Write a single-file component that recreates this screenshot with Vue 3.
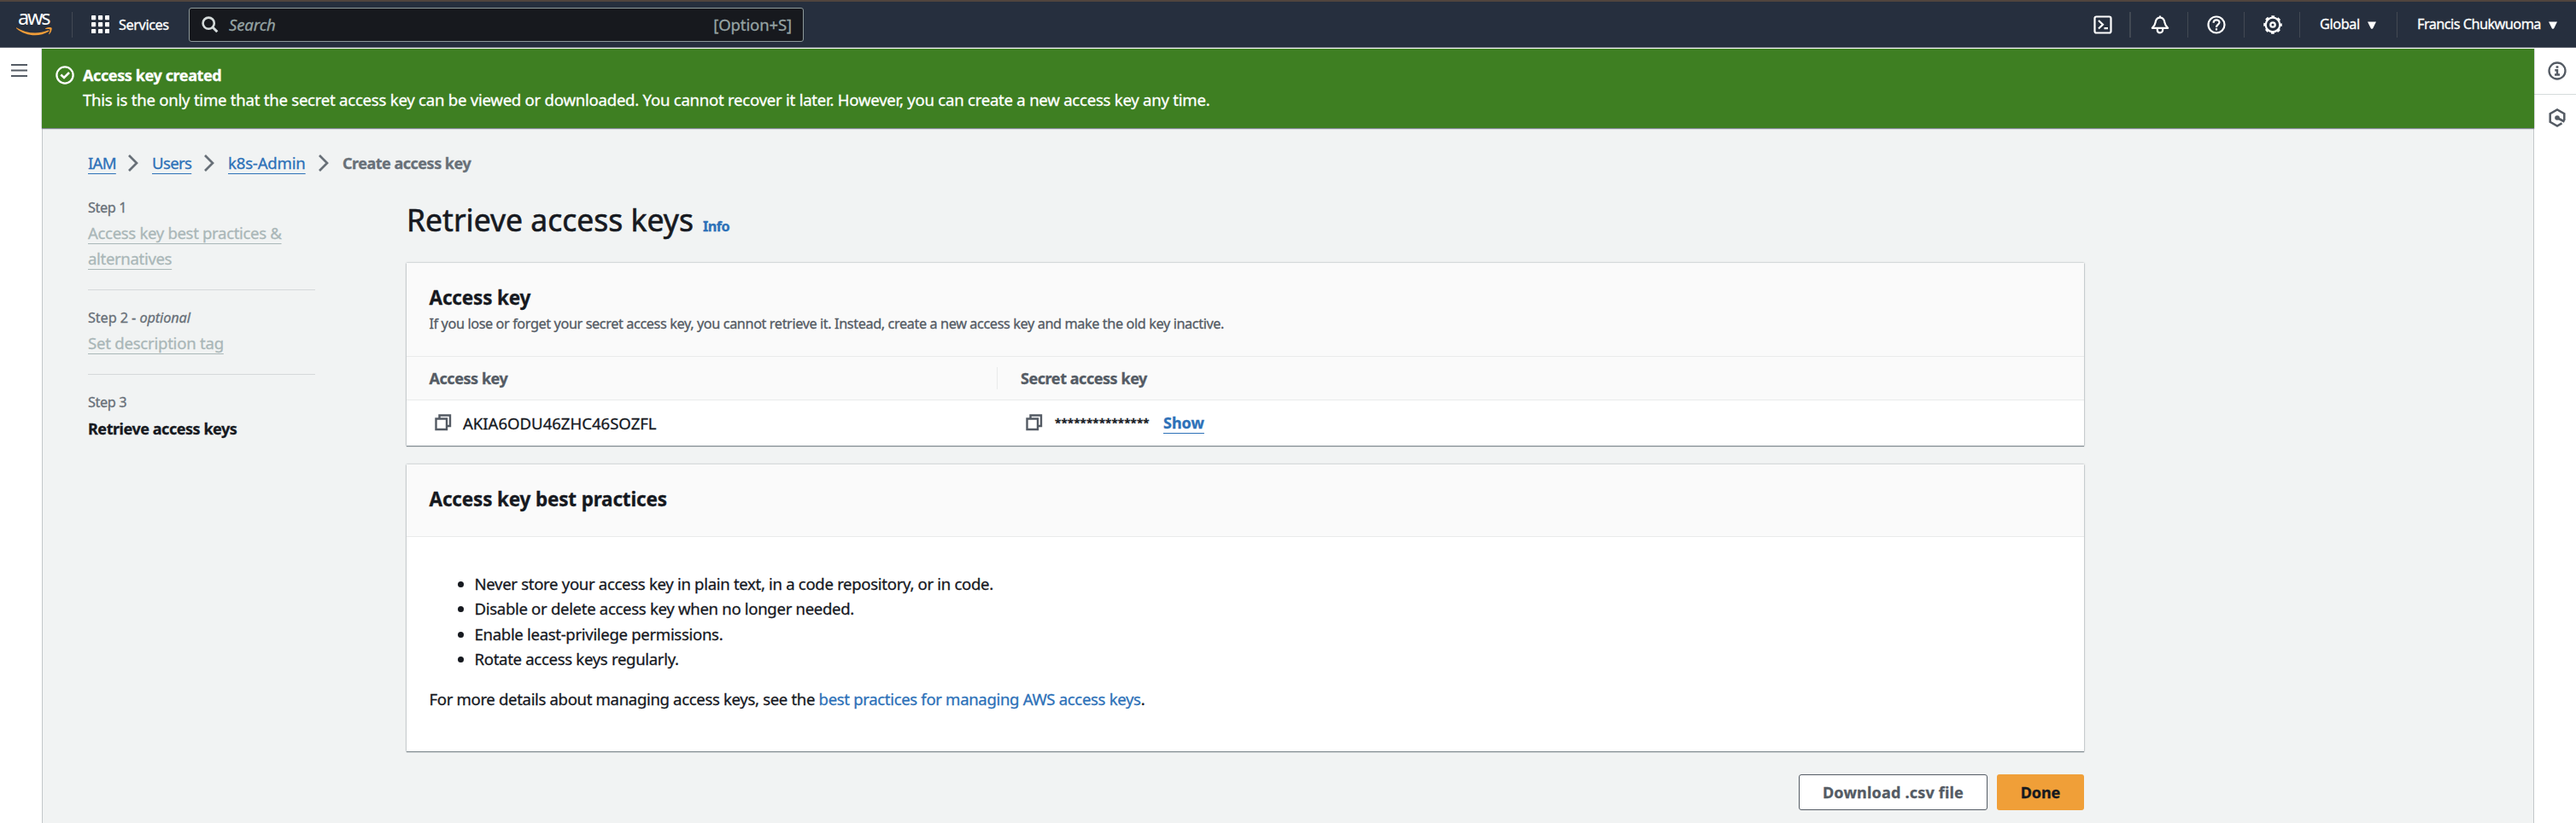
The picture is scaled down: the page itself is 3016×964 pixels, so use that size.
<script setup>
const practices = [
  'Never store your access key in plain text, in a code repository, or in code.',
  'Disable or delete access key when no longer needed.',
  'Enable least-privilege permissions.',
  'Rotate access keys regularly.',
]
const crumbs = [
  { label: 'IAM', cls: 'c1' },
  { label: 'Users', cls: 'c2' },
  { label: 'k8s-Admin', cls: 'c3' },
]
const dots = [0, 8, 16]
</script>

<template>
  <div class="page">
    <header class="topbar">
      <svg class="logo" width="46" height="42" viewBox="0 -10 46 42">
        <text x="3" y="18" textLength="38.5" class="logo-text">aws</text>
        <path class="swoosh" d="M1.500 21.400C12 28 26 29.500 38.200 24.600C39.800 24.200 40 25.300 38.800 26C28 32.800 11.500 31.400 1.200 22.200C.8 21.700 1 21.200 1.500 21.400Z" />
        <path class="swoosh" d="M35.200 22.300C37.500 20.800 42 20.600 42.600 21.700C43.100 22.800 42 27 39.700 29C39.200 29.400 38.900 29.200 39.100 28.700C39.900 26.800 40.900 24.200 40.400 23.500C39.800 22.800 37.300 22.900 35.600 23.100C35 23.100 34.800 22.700 35.200 22.300Z" />
      </svg>
      <div class="divider first"></div>
      <div class="services">
        <svg width="21" height="21" viewBox="0 0 21 21" fill="#fff">
          <template v-for="y in dots" :key="y">
            <rect v-for="x in dots" :key="x" :x="x" :y="y" width="5.200" height="5.200" rx="0.8" />
          </template>
        </svg>
        <span>Services</span>
      </div>
      <div class="search">
        <svg width="20" height="20" viewBox="0 0 20 20" fill="none" stroke="#d5dbdb" stroke-width="2.600">
          <circle cx="8.200" cy="8.200" r="6.600" />
          <path d="M12.800 12.800L18.300 18.300" stroke-width="3" />
        </svg>
        <span class="ph">Search</span>
        <span class="short">[Option+S]</span>
      </div>
      <nav class="tools">
        <div class="cell icon w1">
          <svg width="22" height="22" viewBox="0 0 22 22" fill="none" stroke="#fff" stroke-width="2.200">
            <rect x="1.500" y="1.500" width="19" height="19" rx="2" />
            <path d="M6 6L11 10.800L6 15.500M12.500 15.200H17" />
          </svg>
        </div>
        <div class="cell icon w2">
          <svg width="22" height="22" viewBox="0 0 22 22" fill="none" stroke="#fff" stroke-width="2.200" stroke-linejoin="round">
            <path d="M11 0.500V2.500M1.800 14.800C5.800 11.700 5.300 9 6 6.500C6.800 3.800 8.800 2.600 11 2.600S15.200 3.800 16 6.500C16.700 9 16.200 11.700 20.200 14.800Z" />
            <path d="M7.800 15.500V17C7.800 21.500 14.200 21.500 14.200 17V15.500" />
          </svg>
        </div>
        <div class="cell icon w3">
          <svg width="22" height="22" viewBox="0 0 22 22" fill="none" stroke="#fff" stroke-width="2.200">
            <circle cx="11" cy="11" r="9.500" />
            <path d="M7.600 8.800C7.600 4.200 14.500 4.500 14.500 8.300C14.500 10.700 11 10.700 11 14" />
            <path d="M11 15.200V17.500" />
          </svg>
        </div>
        <div class="cell icon w3">
          <svg width="22" height="22" viewBox="0 0 22 22" fill="none" stroke="#fff" stroke-linejoin="round">
            <circle cx="11" cy="11" r="8.300" stroke-width="2.200" />
            <circle cx="11" cy="11" r="9.700" stroke-width="2.200" stroke-dasharray="3.800 3.818" stroke-dashoffset="1.900" />
            <circle cx="11" cy="11" r="2.700" stroke-width="2.300" />
          </svg>
        </div>
        <div class="cell menu global"><span>Global</span><svg width="10" height="9" viewBox="0 0 10 9"><path d="M0 .5H10L6.200 8.200Q5 9.500 3.800 8.200Z" fill="#fff" /></svg></div>
        <div class="cell menu user"><span>Francis Chukwuoma</span><svg width="10" height="9" viewBox="0 0 10 9"><path d="M0 .5H10L6.200 8.200Q5 9.500 3.800 8.200Z" fill="#fff" /></svg></div>
      </nav>
    </header>

    <div class="body">
      <aside class="left">
        <svg width="19" height="17" viewBox="0 0 19 17" stroke="#545b64" stroke-width="2.200">
          <path d="M0 2H19M0 8.500H19M0 15H19" />
        </svg>
      </aside>

      <main class="main">
        <section class="flash">
          <svg width="22" height="22" viewBox="0 0 22 22" fill="none" stroke="#fff" stroke-width="2.300">
            <circle cx="11" cy="11" r="9.600" />
            <path d="M6.300 10.500L10 14L16 8" stroke-width="2.600" />
          </svg>
          <div>
            <div class="flash-title">Access key created</div>
            <div class="flash-text">This is the only time that the secret access key can be viewed or downloaded. You cannot recover it later. However, you can create a new access key any time.</div>
          </div>
        </section>

        <div class="content">
          <div class="crumbs">
            <template v-for="c in crumbs" :key="c.label">
              <a :class="c.cls">{{ c.label }}</a>
              <svg width="12" height="20" viewBox="0 0 12 20" fill="none" stroke="#687078" stroke-width="2.700"><path d="M1 1L10 10L1 19" /></svg>
            </template>
            <b>Create access key</b>
          </div>

          <div class="columns">
            <div class="steps">
              <div class="step">
                <div class="lbl">Step 1</div>
                <div class="ttl s1"><a>Access key best practices &amp; alternatives</a></div>
              </div>
              <div class="step">
                <div class="lbl two">Step 2 - <i>optional</i></div>
                <div class="ttl"><a>Set description tag</a></div>
              </div>
              <div class="step">
                <div class="lbl">Step 3</div>
                <div class="ttl cur">Retrieve access keys</div>
              </div>
            </div>

            <div class="panel">
              <div class="heading"><h1>Retrieve access keys</h1><a>Info</a></div>

              <section class="card keys">
                <div class="card-head">
                  <h2>Access key</h2>
                  <p>If you lose or forget your secret access key, you cannot retrieve it. Instead, create a new access key and make the old key inactive.</p>
                </div>
                <div class="row th">
                  <div class="col a">Access key</div>
                  <div class="sep"></div>
                  <div class="col s">Secret access key</div>
                </div>
                <div class="row td">
                  <div class="col a">
                    <svg width="20" height="20" viewBox="0 0 20 20" fill="none" stroke="#545b64" stroke-width="2.400"><path d="M1.500 5.500H14V18H1.500ZM5.500 5.500V1.500H18V14H14" /></svg>
                    <span class="id">AKIA6ODU46ZHC46SOZFL</span>
                  </div>
                  <div class="col s">
                    <svg width="20" height="20" viewBox="0 0 20 20" fill="none" stroke="#545b64" stroke-width="2.400"><path d="M1.500 5.500H14V18H1.500ZM5.500 5.500V1.500H18V14H14" /></svg>
                    <span class="mask">***************</span>
                    <a class="show">Show</a>
                  </div>
                </div>
              </section>

              <section class="card best">
                <div class="card-head small"><h2>Access key best practices</h2></div>
                <div class="card-body">
                  <ul>
                    <li v-for="p in practices" :key="p">{{ p }}</li>
                  </ul>
                  <p>For more details about managing access keys, see the <a>best practices for managing AWS access keys</a>.</p>
                </div>
              </section>

              <div class="actions">
                <button class="btn dl">Download .csv file</button>
                <button class="btn done">Done</button>
              </div>
            </div>
          </div>
        </div>
      </main>

      <aside class="right">
        <div class="tool">
          <svg width="22" height="22" viewBox="0 0 22 22" fill="none" stroke="#545b64" stroke-width="2.300">
            <circle cx="11" cy="11" r="9.500" />
            <path d="M11 5.200V7.800" stroke-width="2.800" />
            <path d="M8.300 10.200H11V15.200M8 15.500H14" stroke-width="2.400" />
          </svg>
        </div>
        <div class="tool last">
          <svg width="22" height="22" viewBox="0 0 22 22" fill="none" stroke="#545b64" stroke-width="2.500">
            <path d="M19.300 14V6.200L11 1.500L2.700 6.200V15.800L11 20.500L16.500 17.400" />
            <circle cx="11" cy="11" r="2.800" fill="#545b64" stroke="none" />
            <path d="M11 11L19.500 15.500" stroke-width="2.800" />
          </svg>
        </div>
      </aside>
    </div>
  </div>
</template>

<style>
html, body { margin: 0; overflow: hidden; }
</style>

<style scoped>
.page {
  width: 3016px; height: 964px; display: flex; flex-direction: column; overflow: hidden;
  font-family: "Noto Sans", "Open Sans", sans-serif; font-size: 18.6px; letter-spacing: -0.33px;
  -webkit-text-stroke-width: 0.3px;
  color: #16191f; background: #fff; box-sizing: border-box;
}
.page * { box-sizing: border-box; }
svg { flex: none; display: block; }
h1, h2, p, ul { margin: 0; padding: 0; }
.topbar {
  height: 56px; flex: none; display: flex; align-items: flex-start;
  background: #262f3e; border-top: 2px solid #50453e; border-bottom: 1px solid #565c69;
}
.logo { margin: -1px 0 0 18px; }
.logo-text { font-size: 23.5px; fill: #fff; letter-spacing: 0; }
.swoosh { fill: #f09c38; }
.divider { width: 1px; height: 30px; margin-top: 12px; background: #424953; }
.first { margin-left: 20px; }
.services {
  display: flex; align-items: center; gap: 11px; height: 53px; margin-left: 22px; width: 114px;
  color: #fff; font-size: 16.3px; letter-spacing: -0.42px;
}
.services span { line-height: 24px; margin-top: 1px; }
.search {
  width: 720px; height: 40px; margin-top: 7px; border: 1px solid #8d999a; border-radius: 3px;
  background: #17191e; display: flex; align-items: center; padding: 0 13px 0 14px; color: #95a3a3;
  letter-spacing: -0.15px; line-height: 38px;
}
.ph { font-style: italic; margin-left: 12px; }
.short { margin-left: auto; }
.tools { margin-left: auto; display: flex; padding-top: 12px; color: #fff; font-size: 16.3px; }
.cell { height: 30px; display: flex; align-items: center; justify-content: center; border-right: 1px solid #424953; }
.icon { padding-left: 2px; }
.w1 { width: 66px; border-right-width: 2px; }
.w2 { width: 67px; }
.w3 { width: 65.500px; }
.menu { justify-content: flex-start; padding-left: 23px; }
.menu span { line-height: 24px; margin-top: -2px; white-space: nowrap; }
.global { width: 114px; letter-spacing: -0.4px; }
.global svg { margin-left: 9px; }
.user { width: 209px; border: 0; letter-spacing: -0.55px; }
.user svg { margin-left: 9.500px; }

.body { flex: 1; display: flex; min-height: 0; }
.left { width: 49px; padding: 18px 0 0 13px; }
.main { width: 2918px; background: #f1f3f3; border-right: 1px solid #c3c7ca; border-left: 1px solid #c3c7ca; }
.flash {
  height: 94px; margin: 0 -1px; border-top: 1px solid #fff; background: #3e7f22; color: #fff;
  display: flex; gap: 11px; padding: 20px 0 0 16px; box-shadow: 0 1px 1px #7e868d, 0 0 2px rgba(0, 20, 40, .3);
  clip-path: inset(0 -3px -4px -3px);
}
.flash > svg { margin: 0 -1px 0 0; }
.flash-title { font-weight: 700; font-size: 18px; letter-spacing: -0.4px; line-height: 28px; margin-top: -3px; }
.flash-text { letter-spacing: -0.257px; line-height: 29px; white-space: nowrap; }
.content { padding: 27px 0 0 53px; }
.crumbs { display: flex; align-items: center; height: 28px; color: #687078; line-height: 28px; }
.crumbs a, .ttl a, .show {
  text-decoration: underline; text-decoration-thickness: 1px; text-underline-offset: 4.500px; text-decoration-skip-ink: none;
}
.crumbs a { color: #2d71b8; }
.crumbs svg { margin: 0 16px 0 15px; }
.c1 { letter-spacing: -0.75px; width: 32px; }
.c2 { letter-spacing: -0.67px; width: 46px; }
.c3 { letter-spacing: -0.2px; width: 91px; }
.crumbs b { font-size: 18px; letter-spacing: -0.5px; }
.columns { display: flex; padding-top: 26px; }
.steps { width: 266px; margin-right: 107px; }
.step { padding-bottom: 21px; border-bottom: 1px solid #d5d9da; margin-bottom: 20px; }
.step:last-child { border: 0; }
.lbl { font-size: 16.3px; line-height: 24px; letter-spacing: -0.4px; color: #687078; margin-bottom: 3px; }
.lbl.two { letter-spacing: -0.1px; }
.ttl { line-height: 30px; letter-spacing: -0.25px; color: #aab7b8; }
.s1 { letter-spacing: -0.35px; }
.cur { color: #16191f; font-weight: 700; font-size: 18px; letter-spacing: -0.46px; padding-top: 1px; }
.panel { width: 1964px; }
.heading { display: flex; align-items: baseline; height: 77px; }
.heading h1 { font-weight: 400; font-size: 35.500px; line-height: 52px; letter-spacing: 0; -webkit-text-stroke-width: 0.6px; }
.heading a { color: #2d71b8; font-weight: 700; font-size: 16.3px; letter-spacing: -0.6px; margin-left: 11px; }
.card { background: #fff; box-shadow: 0 1px 1px #7f898f, 0 0 2px rgba(0, 20, 30, .35); }
.keys { height: 214px; }
.card-head { height: 110px; padding: 25px 26.500px 0; background: #fafafa; border-bottom: 1px solid #e9ebeb; }
h2 { font-size: 22.500px; line-height: 32px; letter-spacing: -0.17px; font-weight: 700; }
.card-head p { font-size: 16.3px; letter-spacing: -0.413px; line-height: 26px; color: #545b64; margin-top: 1px; }
.row { display: flex; align-items: center; }
.th { height: 51px; background: #fafafa; border-bottom: 1px solid #e9ebeb; color: #545b64; font-weight: 700; font-size: 18px; letter-spacing: -0.45px; }
.th .a { padding-left: 26.500px; width: 691px; }
.sep { width: 1px; height: 26px; background: #e9ebeb; }
.th .s { padding-left: 27px; }
.td { height: 53px; padding-bottom: 1px; }
.col { display: flex; align-items: center; }
.td .a { width: 725px; padding-left: 33px; }
.id { letter-spacing: -0.03px; margin-left: 13px; }
.mask { font-size: 13.3px; letter-spacing: 0.05px; margin-left: 14px; width: 127px; -webkit-text-stroke-width: 0.6px; }
.show { color: #2d71b8; font-weight: 700; font-size: 18px; letter-spacing: 0; }
.best { height: 336px; margin-top: 22px; }
.card-head.small { height: 85px; padding-top: 25px; }
.card-body { padding: 40px 26.500px 0; }
ul { padding-left: 53px; }
li { line-height: 29.3px; }
.card-body p { line-height: 30px; margin-top: 18px; letter-spacing: -0.355px; }
.card-body a { color: #2d71b8; }
.actions { display: flex; justify-content: flex-end; gap: 11px; margin-top: 27px; }
.btn { height: 42px; border-radius: 3px; font-family: inherit; font-weight: 700; font-size: 18px; padding: 0; }
.dl { width: 221px; background: #fff; border: 1px solid #545b64; color: #545b64; letter-spacing: 0.2px; }
.done { width: 102px; border: 0; background: #f09f38; color: #16191f; letter-spacing: -0.1px; }
.right { width: 49px; }
.tool { height: 55px; padding: 16px 0 0 16px; border-bottom: 1px solid #d5dbdb; }
.tool.last { border: 0; }
</style>
